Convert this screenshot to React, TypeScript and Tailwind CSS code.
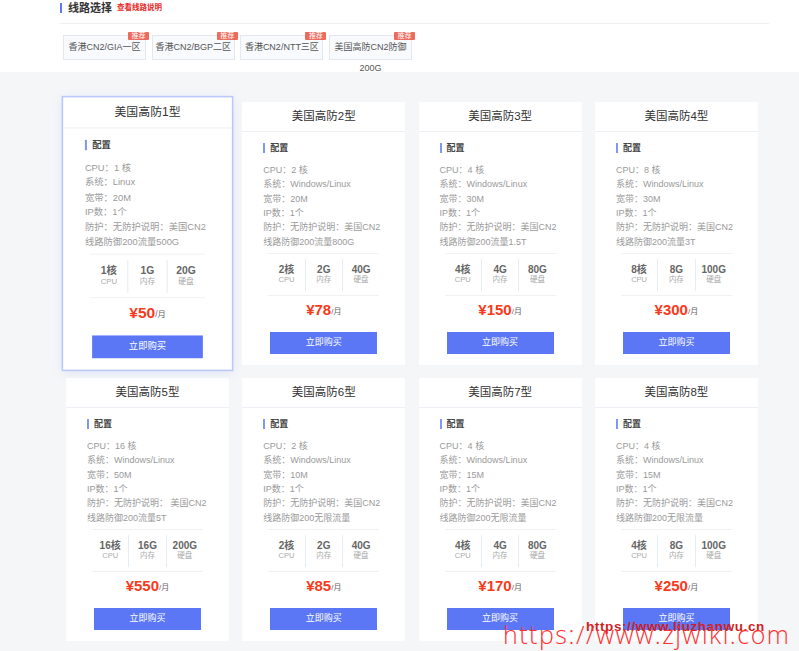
import React from 'react';

interface Plan {
  name: string;
  cpu: string;
  os: string;
  bw: string;
  guard: string;
  traffic: string;
  stats: [string, string, string];
  price: string;
}

const plans: Plan[] = [
  { name: '美国高防1型', cpu: '1', os: 'Linux', bw: '20M', guard: '防护：无防护说明：美国CN2', traffic: '线路防御200流量500G', stats: ['1核', '1G', '20G'], price: '50' },
  { name: '美国高防2型', cpu: '2', os: 'Windows/Linux', bw: '20M', guard: '防护：无防护说明：美国CN2', traffic: '线路防御200流量800G', stats: ['2核', '2G', '40G'], price: '78' },
  { name: '美国高防3型', cpu: '4', os: 'Windows/Linux', bw: '30M', guard: '防护：无防护说明：美国CN2', traffic: '线路防御200流量1.5T', stats: ['4核', '4G', '80G'], price: '150' },
  { name: '美国高防4型', cpu: '8', os: 'Windows/Linux', bw: '30M', guard: '防护：无防护说明：美国CN2', traffic: '线路防御200流量3T', stats: ['8核', '8G', '100G'], price: '300' },
  { name: '美国高防5型', cpu: '16', os: 'Windows/Linux', bw: '50M', guard: '防护：无防护说明： 美国CN2', traffic: '线路防御200流量5T', stats: ['16核', '16G', '200G'], price: '550' },
  { name: '美国高防6型', cpu: '2', os: 'Windows/Linux', bw: '10M', guard: '防护：无防护说明：美国CN2', traffic: '线路防御200无限流量', stats: ['2核', '2G', '40G'], price: '85' },
  { name: '美国高防7型', cpu: '4', os: 'Windows/Linux', bw: '15M', guard: '防护：无防护说明：美国CN2', traffic: '线路防御200无限流量', stats: ['4核', '4G', '80G'], price: '170' },
  { name: '美国高防8型', cpu: '4', os: 'Windows/Linux', bw: '15M', guard: '防护：无防护说明：美国CN2', traffic: '线路防御200无限流量', stats: ['4核', '8G', '100G'], price: '250' },
];

const statLabels = ['CPU', '内存', '硬盘'];

const lines = ['香港CN2/GIA一区', '香港CN2/BGP二区', '香港CN2/NTT三区'];

const SpecLine: React.FC<{ children: React.ReactNode }> = ({ children }) => (
  <div className="flex h-[14.3px] items-center whitespace-pre">{children}</div>
);

const PlanCard: React.FC<{ plan: Plan; active?: boolean }> = ({ plan, active }) => (
  <div
    className={`flex h-[263px] w-[163px] flex-col bg-white ${
      active ? 'relative z-10 scale-[1.035] shadow-[0_2px_10px_rgba(91,119,246,0.15)] ring-[1.5px] ring-[#bac8fb]' : ''
    }`}
  >
    <div className="flex h-[30px] shrink-0 items-center justify-center border-b border-[#eef0f5] text-[11.5px] text-[#333]">
      {plan.name}
    </div>
    <div className="mt-[11px] flex h-[10px] shrink-0 items-center pl-[21px]">
      <span className="mr-[5px] h-[10px] w-[2px] bg-[#8098f5]" />
      <span className="text-[9px] font-bold leading-[10px] text-[#444]">配置</span>
    </div>
    <div className="mt-[10px] h-[86px] shrink-0 pl-[21px] text-[9px] leading-[12px] text-[#9a9a9a]">
      <SpecLine>CPU：{plan.cpu} 核</SpecLine>
      <SpecLine>系统：{plan.os}</SpecLine>
      <SpecLine>宽带：{plan.bw}</SpecLine>
      <SpecLine>IP数：1个</SpecLine>
      <SpecLine>{plan.guard}</SpecLine>
      <SpecLine>{plan.traffic}</SpecLine>
    </div>
    <div className="mx-[26px] mt-[4px] flex h-[43px] shrink-0 items-center border-y border-[#f0f1f4]">
      {plan.stats.map((s, i) => (
        <div
          key={i}
          className={`flex h-[32px] flex-1 flex-col items-center justify-center ${i ? 'border-l border-[#e4ecf5]' : ''}`}
        >
          <div className="h-[11px] text-[10px] font-bold leading-[11px] text-[#666]">{s}</div>
          <div className="h-[10px] text-[7.5px] leading-[10px] text-[#aaa]">{statLabels[i]}</div>
        </div>
      ))}
    </div>
    <div className="flex h-[28px] shrink-0 items-center justify-center">
      <span className="text-[15px] font-bold leading-[16px] text-[#f83a1c]">¥{plan.price}</span>
      <span className="mt-[3px] text-[8px] leading-[10px] text-[#666]">/月</span>
    </div>
    <div className="mx-auto mt-[8px] flex h-[22px] w-[107px] shrink-0 items-center justify-center bg-[#5b77f6] text-[9px] text-white">
      立即购买
    </div>
  </div>
);

export default function App() {
  return (
    <div className="relative min-h-[651px] overflow-hidden bg-[#f5f6f8] font-['Liberation_Sans','Noto_Sans_CJK_SC',sans-serif]">
      {/* 线路选择 */}
      <div className="h-[72px] bg-white pt-[3px]">
        <div className="flex h-[10px] items-center pl-[60px]">
          <span className="h-[10px] w-[2px] bg-[#5b77f6]" />
          <span className="ml-[6px] text-[11px] font-bold text-[#333]">线路选择</span>
          <span className="ml-[5px] text-[7.5px] font-bold text-[#e8261e]">查看线路说明</span>
        </div>
        <div className="ml-[60px] mr-[30px] mt-[10px] border-t border-[#eef0f3]" />
        <div className="mt-[11px] flex gap-[5.7px] pl-[63px]">
          {[...lines, '美国高防CN2防御'].map((name, i) => (
            <div
              key={i}
              className="relative h-[25px] w-[83px] border border-[#e3e8f0] bg-[#f8fafd] pt-[1px] text-center text-[9px] leading-[21px] text-[#555]"
            >
              {name}
              {i === 3 && <div>200G</div>}
              <span className="absolute -right-[4px] -top-[4px] h-[8px] w-[21px] rounded-[1px] bg-[#ec6b5d] text-center text-[7px] leading-[8px] text-white">
                推荐
              </span>
            </div>
          ))}
        </div>
      </div>

      {/* 套餐 */}
      <div className="grid grid-cols-[repeat(4,163px)] gap-x-[13.3px] gap-y-[13px] pb-[10px] pl-[66px] pt-[30px]">
        {plans.map((p, i) => (
          <PlanCard key={p.name} plan={p} active={i === 0} />
        ))}
      </div>

      {/* 水印 */}
      <div className="pointer-events-none absolute left-[586px] top-[620px] text-[13.5px] font-bold leading-[14px] tracking-[0.6px] text-[#cf1f1f]">
        https://www.liuzhanwu.cn
      </div>
      <div className="pointer-events-none absolute left-[503px] top-[622px] font-['Open_Sans',sans-serif] text-[25px] font-light leading-[25px] tracking-[1.5px] text-[#ff3030]">
        https://www.zjwiki.com
      </div>
    </div>
  );
}
